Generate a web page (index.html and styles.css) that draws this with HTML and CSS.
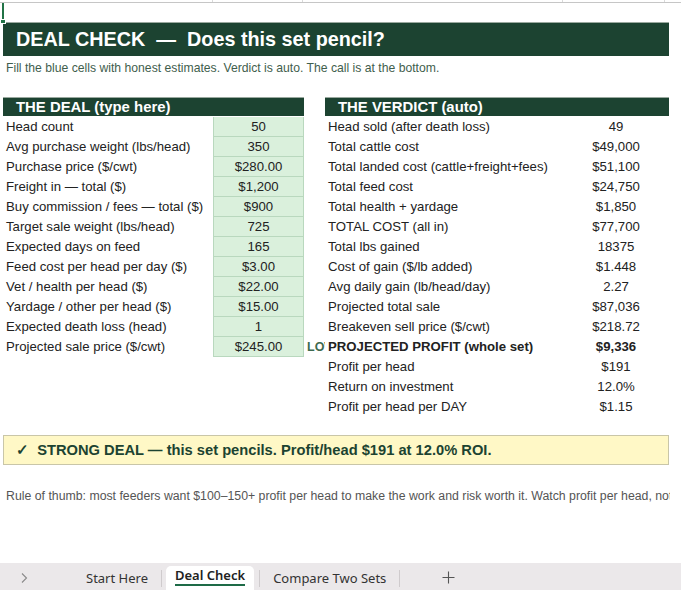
FILE: index.html
```html
<!DOCTYPE html>
<html>
<head>
<meta charset="utf-8">
<link rel="stylesheet" href="styles.css">
</head>
<body>
<div class="sheet">
  <div class="toprow">
    <div class="tc tc-a"></div><div class="tc tc-b"></div><div class="tc tc-c"></div><div class="tc tc-d"></div><div class="tc tc-e"></div><div class="tc tc-f"></div><div class="tc tc-g"></div>
  </div>
  <div class="selcell"><span class="handle"></span></div>
  <div class="title">DEAL CHECK &nbsp;—&nbsp; Does this set pencil?</div>
  <p class="sub">Fill the blue cells with honest estimates. Verdict is auto. The call is at the bottom.</p>

  <div class="blocks">
    <div class="deal">
      <div class="hdr">THE DEAL (type here)</div>
      <div class="row"><span class="lbl">Head count</span><span class="inp">50</span></div>
      <div class="row"><span class="lbl">Avg purchase weight (lbs/head)</span><span class="inp">350</span></div>
      <div class="row"><span class="lbl">Purchase price ($/cwt)</span><span class="inp">$280.00</span></div>
      <div class="row"><span class="lbl">Freight in — total ($)</span><span class="inp">$1,200</span></div>
      <div class="row"><span class="lbl">Buy commission / fees — total ($)</span><span class="inp">$900</span></div>
      <div class="row"><span class="lbl">Target sale weight (lbs/head)</span><span class="inp">725</span></div>
      <div class="row"><span class="lbl">Expected days on feed</span><span class="inp">165</span></div>
      <div class="row"><span class="lbl">Feed cost per head per day ($)</span><span class="inp">$3.00</span></div>
      <div class="row"><span class="lbl">Vet / health per head ($)</span><span class="inp">$22.00</span></div>
      <div class="row"><span class="lbl">Yardage / other per head ($)</span><span class="inp">$15.00</span></div>
      <div class="row"><span class="lbl">Expected death loss (head)</span><span class="inp">1</span></div>
      <div class="row"><span class="lbl">Projected sale price ($/cwt)</span><span class="inp">$245.00</span></div>
    </div>
    <div class="gapcol">
      <div class="gaprow">LOW</div>
    </div>
    <div class="verdict">
      <div class="hdr">THE VERDICT (auto)</div>
      <div class="row"><span class="vlbl">Head sold (after death loss)</span><span class="val">49</span></div>
      <div class="row"><span class="vlbl">Total cattle cost</span><span class="val">$49,000</span></div>
      <div class="row"><span class="vlbl">Total landed cost (cattle+freight+fees)</span><span class="val">$51,100</span></div>
      <div class="row"><span class="vlbl">Total feed cost</span><span class="val">$24,750</span></div>
      <div class="row"><span class="vlbl">Total health + yardage</span><span class="val">$1,850</span></div>
      <div class="row"><span class="vlbl">TOTAL COST (all in)</span><span class="val">$77,700</span></div>
      <div class="row"><span class="vlbl">Total lbs gained</span><span class="val">18375</span></div>
      <div class="row"><span class="vlbl">Cost of gain ($/lb added)</span><span class="val">$1.448</span></div>
      <div class="row"><span class="vlbl">Avg daily gain (lb/head/day)</span><span class="val">2.27</span></div>
      <div class="row"><span class="vlbl">Projected total sale</span><span class="val">$87,036</span></div>
      <div class="row"><span class="vlbl">Breakeven sell price ($/cwt)</span><span class="val">$218.72</span></div>
      <div class="row bold"><span class="vlbl">PROJECTED PROFIT (whole set)</span><span class="val">$9,336</span></div>
      <div class="row"><span class="vlbl">Profit per head</span><span class="val">$191</span></div>
      <div class="row"><span class="vlbl">Return on investment</span><span class="val">12.0%</span></div>
      <div class="row"><span class="vlbl">Profit per head per DAY</span><span class="val">$1.15</span></div>
    </div>
  </div>

  <div class="call">✓ &nbsp;STRONG DEAL — this set pencils. Profit/head $191 at 12.0% ROI.</div>
  <p class="rule">Rule of thumb: most feeders want $100–150+ profit per head to make the work and risk worth it. Watch profit per head, not just the total.</p>
</div>

<div class="tabs">
  <span class="chev">
    <svg width="8" height="12" viewBox="0 0 8 12"><path d="M2 1.5 L6.5 6 L2 10.5" fill="none" stroke="#8a8a8a" stroke-width="1.1"/></svg>
  </span>
  <span class="tab first">Start Here</span>
  <span class="sep"></span>
  <span class="tab active"><span class="tabtxt">Deal Check</span></span>
  <span class="sep"></span>
  <span class="tab">Compare Two Sets</span>
  <span class="sep"></span>
  <span class="plus">
    <svg width="13" height="13" viewBox="0 0 13 13"><path d="M6.5 0.5 V12.5 M0.5 6.5 H12.5" stroke="#555" stroke-width="1.1" fill="none"/></svg>
  </span>
</div>
<div class="bottomstrip"></div>
</body>
</html>
```

FILE: styles.css
```css
html, body {
  margin: 0;
  padding: 0;
  background: #ffffff;
  width: 681px;
  height: 597px;
  overflow: hidden;
}
body {
  font-family: "Liberation Sans", Arial, sans-serif;
  color: #222;
}
.sheet {
  position: relative;
  height: 563px;
  overflow: hidden;
}
.toprow {
  display: flex;
  height: 2px;
  border-bottom: 1px solid #c6c6c6;
}
.tc {
  height: 2px;
  border-right: 1px solid #dadada;
  flex: none;
}
.tc-a { width: 2px; border-right: none; }
.tc-b { width: 210px; }
.tc-c { width: 89px; }
.tc-d { width: 259px; }
.tc-e { width: 101px; }
.tc-f { width: 30px; }
.tc-g { flex: 1; border-right: none; }

.selcell {
  position: absolute;
  left: 2px;
  top: 3px;
  width: 2px;
  height: 19px;
  background: #217346;
}
.selcell .handle {
  position: absolute;
  left: -2px;
  top: 16px;
  width: 6px;
  height: 5px;
  background: #217346;
  border: 1px solid #fff;
  box-sizing: border-box;
}

.title {
  margin: 19px 0 0 3px;
  width: 666px;
  height: 34px;
  box-sizing: border-box;
  background: #1c4331;
  color: #fff;
  font-weight: bold;
  font-size: 19.8px;
  line-height: 33px;
  padding-left: 13px;
  white-space: nowrap;
  border-top: 1px solid #9aa99f;
}
.sub {
  margin: 5px 0 0 6px;
  font-size: 12.2px;
  line-height: 15px;
  color: #3f5e4d;
  white-space: nowrap;
}

.blocks {
  display: flex;
  margin-top: 21px;
  margin-left: 3px;
}
.deal { width: 301px; flex: none; }
.gapcol {
  width: 21px;
  flex: none;
  padding-top: 240px;
  overflow: hidden;
}
.gaprow {
  height: 20px;
  line-height: 20px;
  font-size: 12.5px;
  font-weight: bold;
  color: #3e6a4f;
  padding-left: 3px;
  white-space: nowrap;
  overflow: hidden;
}
.verdict { width: 344px; flex: none; }

.hdr {
  height: 19px;
  box-sizing: border-box;
  background: #1c4331;
  color: #fff;
  font-weight: bold;
  font-size: 14.9px;
  line-height: 18px;
  padding-left: 13px;
  border-top: 1px solid #9aa99f;
  white-space: nowrap;
  margin-bottom: 1px;
}
.row {
  display: flex;
  height: 20px;
  line-height: 20px;
  font-size: 13.2px;
  white-space: nowrap;
}
.lbl {
  width: 210px;
  flex: none;
  padding-left: 3px;
  box-sizing: border-box;
}
.inp {
  width: 91px;
  flex: none;
  box-sizing: border-box;
  text-align: center;
  background: #daf0dc;
  border: 1px solid #b9d8be;
  border-top: none;
  line-height: 19px;
}
.vlbl {
  width: 232px;
  flex: none;
  padding-left: 3px;
  box-sizing: border-box;
}
.val {
  width: 112px;
  flex: none;
  text-align: center;
  padding-left: 6px;
  box-sizing: border-box;
}
.row.bold { font-weight: bold; }

.call {
  margin: 18px 0 0 3px;
  width: 666px;
  height: 30px;
  box-sizing: border-box;
  background: #fff8c6;
  border: 1px solid #c9c6a8;
  color: #1c4331;
  font-weight: bold;
  font-size: 14.7px;
  line-height: 28px;
  padding-left: 12px;
  white-space: nowrap;
}
.rule {
  margin: 24px 0 0 6px;
  width: 664px;
  overflow: hidden;
  font-size: 12.3px;
  line-height: 15px;
  color: #555;
  white-space: nowrap;
}

.tabs {
  display: flex;
  align-items: center;
  height: 27px;
  background: #ebe8ea;
  font-family: "Noto Sans", "Open Sans", sans-serif;
  font-size: 13px;
  color: #333;
}
.chev {
  width: 8px;
  margin-left: 20px;
  display: flex;
  align-items: center;
  padding-top: 2px;
}
.tab {
  padding-top: 3px;
  white-space: nowrap;
}
.tab.first { margin-left: 58px; }
.sep {
  width: 1px;
  height: 17px;
  background: #cfcbcd;
  margin: 3px 0 0 13px;
}
.tab.active {
  align-self: flex-end;
  height: 24px;
  box-sizing: border-box;
  background: #fff;
  border-radius: 5px 5px 0 0;
  padding: 0 9px;
  margin-left: 4px;
  display: flex;
  align-items: flex-start;
  font-weight: 600;
  color: #222;
}
.tabtxt {
  display: block;
  line-height: 17px;
  padding-top: 1px;
  border-bottom: 2px solid #1e6b47;
}
.tab.active + .sep { margin-left: 5px; }
.tab.active + .sep + .tab { margin-left: 13px; }
.plus {
  margin-left: 42px;
  display: flex;
  align-items: center;
  padding-top: 2px;
}
.bottomstrip {
  height: 7px;
  background: #ffffff;
}
```
